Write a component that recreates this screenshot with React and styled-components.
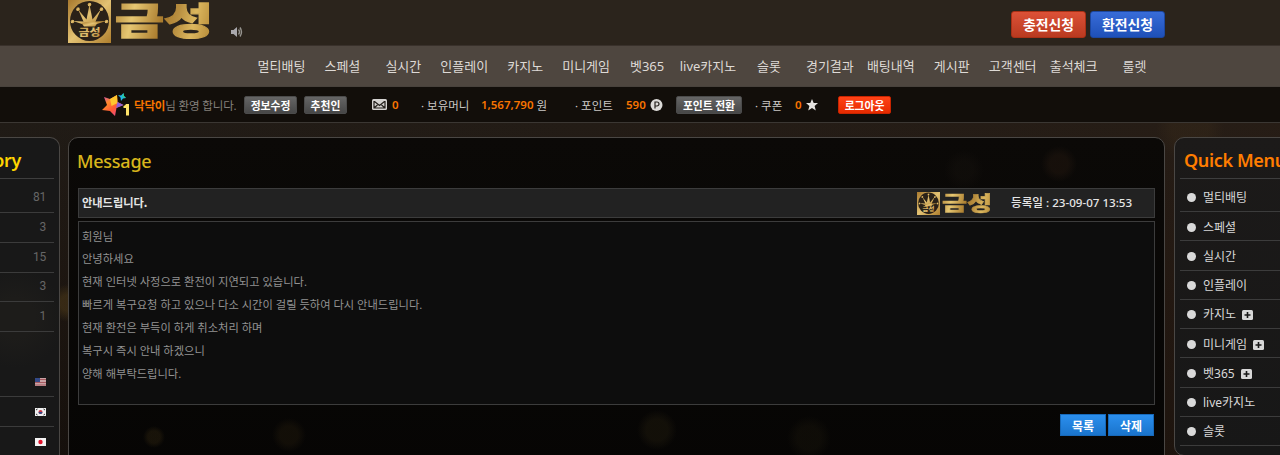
import React from 'react';
import styled, { createGlobalStyle, css } from 'styled-components';

const GlobalStyle = createGlobalStyle`
  * {
    box-sizing: border-box;
  }
  body {
    margin: 0;
    background: #000;
    font-family: 'Noto Sans', 'Noto Sans CJK KR', sans-serif;
  }
`;

const Page = styled.div`
  width: 1280px;
  height: 455px;
  overflow: hidden;
  display: flex;
  flex-direction: column;
  color: #ddd;
`;

const TopBar = styled.header`
  height: 45px;
  flex: none;
  display: flex;
  padding-left: 68px;
  padding-right: 115px;
  background: #2b241c;
`;

const LogoBox = styled.div`
  display: flex;
  align-items: center;
  gap: ${props => (props.$small ? 2 : 4)}px;
  height: ${props => (props.$small ? 23 : 42)}px;
  width: ${props => (props.$small ? 76 : 144)}px;
  flex: none;

  svg {
    display: block;
    flex: none;
  }
`;

/* the wordmark is wider than it is tall, so the heavy face is flattened */
const LogoText = styled.span`
  font-family: 'Noto Sans CJK KR', sans-serif;
  font-weight: 900;
  font-size: ${props => (props.$small ? 27 : 51)}px;
  line-height: 1.1;
  flex: none;
  white-space: nowrap;
  margin-top: ${props => (props.$small ? 0 : -3)}px;
  transform: scale(${props => (props.$small ? '1.01, 0.74' : '1.045, 0.73')});
  transform-origin: 0 50%;
  color: transparent;
  -webkit-text-stroke: ${props => (props.$small ? 0.8 : 1.8)}px transparent;
  background: linear-gradient(100deg, #b28638 0%, #e6c772 20%, #a97b2d 48%, #b98f40 62%, #dcb75e 78%, #b08432 100%);
  background-clip: text;
  -webkit-background-clip: text;
`;

const SoundIcon = styled.svg`
  margin: 26px 0 0 18px;
`;

const TopActions = styled.div`
  display: flex;
  gap: 4px;
  margin: 11px 0 0 auto;
`;

const TopButton = styled.button`
  width: 75px;
  height: 27px;
  padding: 0;
  border: 1px solid ${props => (props.$blue ? '#1c479f' : '#a93015')};
  border-radius: 3px;
  color: #fff;
  font: 700 13.9px/23px 'Noto Sans CJK KR', sans-serif;
  background: ${props =>
    props.$blue
      ? 'linear-gradient(#386cd8, #1e50b8)'
      : 'linear-gradient(#dc5137, #b93a20)'};
`;

const Nav = styled.nav`
  height: 42px;
  flex: none;
  display: grid;
  grid-template-columns: repeat(15, 1fr);
  padding: 0 115px 0 251px;
  border-top: 1px solid #39312b;
  border-bottom: 1px solid #48423c;
  background: #4e463f;
`;

const NavItem = styled.a`
  font-size: 13px;
  line-height: 41px;
  text-align: center;
  white-space: nowrap;
  color: #dedad6;
`;

const InfoBar = styled.div`
  height: 36px;
  flex: none;
  display: flex;
  align-items: center;
  padding-left: 101px;
  border-bottom: 1px solid #3b3733;
  background: #120e0a;
  font-size: 11.5px;
`;

const Slot = styled.div`
  width: ${props => props.$w}px;
  flex: none;
  display: flex;
  align-items: center;
  white-space: nowrap;
  letter-spacing: ${props => (props.$dim ? '-0.15px' : '0')};
  color: ${props => (props.$dim ? '#84807c' : '#ccc9c6')};
`;

const Num = styled.b`
  color: #f77400;
  font-weight: 600;
`;

const SmallButton = styled.button`
  width: ${props => props.$w}px;
  height: 18px;
  padding: 0;
  border: 1px solid ${props => (props.$red ? '#c82400' : '#4b4b4b')};
  border-radius: 2px;
  color: #fff;
  font: 700 10.8px/16px 'Noto Sans CJK KR', sans-serif;
  background: ${props =>
    props.$red
      ? 'linear-gradient(#ff4317, #e62b00)'
      : 'linear-gradient(#656565, #474747)'};
`;

const Body = styled.main`
  flex: 1;
  display: flex;
  align-items: flex-start;
  padding-top: 14px;
  background:
    radial-gradient(circle at 68px 180px, rgba(95, 72, 28, 0.4) 8px, transparent 19px),
    radial-gradient(circle at 1190px 5px, rgba(74, 55, 29, 0.2) 18px, transparent 34px),
    linear-gradient(90deg, rgba(0, 0, 0, 0), rgba(58, 35, 22, 0.25)),
    linear-gradient(#201b16, #1c1510 50%, #140f0b);
`;

const panel = css`
  border: 1px solid #4a4744;
  height: 340px;
`;

const LeftPanel = styled.aside`
  ${panel};
  width: 60px;
  flex: none;
  padding-right: 5px;
  border-left: 0;
  border-radius: 0 10px 0 0;
  background: radial-gradient(circle at 15px 180px, #1d1c1a 20px, #181818 50px);
`;

const SideTitle = styled.h2`
  margin: 0;
  height: 41px;
  padding-left: ${props => props.$indent || 0}px;
  border-bottom: 1px solid #3e3e3e;
  font-size: 18px;
  font-weight: 600;
  line-height: 45px;
  letter-spacing: -0.35px;
  white-space: nowrap;
  color: ${props => props.$color};
`;

const LeftTitle = styled(SideTitle)`
  display: flex;
  justify-content: flex-end;
  padding-right: 33px;
`;

const CountRow = styled.div`
  height: ${props => props.$h}px;
  display: flex;
  align-items: flex-end;
  justify-content: flex-end;
  padding: 0 8px 6px 0;
  border-bottom: 1px solid #3b3b3b;
  font: 12px/17px Roboto, sans-serif;
  letter-spacing: -0.3px;
  color: #666;
`;

const Flag = styled.svg`
  display: block;
  margin-bottom: 4px;
`;

const Content = styled.section`
  ${panel};
  width: 1097px;
  flex: none;
  margin: 0 9px 0 8px;
  padding: 0 9px;
  border-radius: 10px;
  background:
    radial-gradient(circle at 85px 299px, rgba(50, 39, 16, 0.4) 6px, transparent 11px),
    radial-gradient(circle at 220px 297px, rgba(30, 23, 11, 0.5) 9px, transparent 17px),
    radial-gradient(circle at 588px 292px, rgba(36, 30, 15, 0.4) 11px, transparent 20px),
    radial-gradient(circle at 740px 300px, rgba(26, 22, 12, 0.4) 12px, transparent 22px),
    radial-gradient(circle at 990px 26px, rgba(34, 23, 15, 0.5) 9px, transparent 18px),
    radial-gradient(circle at 895px 32px, rgba(22, 18, 14, 0.4) 9px, transparent 20px),
    linear-gradient(#0b0907, #060504);
`;

const PageTitle = styled.h1`
  margin: 0 0 0 -1px;
  height: 50px;
  font-size: 18px;
  font-weight: 500;
  line-height: 46px;
  letter-spacing: -0.25px;
  color: #d8b51c;
`;

const SubjectBar = styled.div`
  width: 1077px;
  height: 30px;
  display: flex;
  align-items: center;
  padding-left: 3px;
  border: 1px solid #3c3c3c;
  background: #222;
  font-size: 11.6px;
  color: #e6e6e6;
`;

const Subject = styled.span`
  flex: 1;
  margin-top: -2px;
  font: 700 11.2px 'Noto Sans CJK KR', sans-serif;
`;

const PostDate = styled.span`
  width: 143px;
  margin: -2px 0 0 18px;
  white-space: nowrap;
  font-weight: 500;
`;

const Article = styled.div`
  width: 1077px;
  height: 184px;
  margin-top: 3px;
  padding: 3.6px 3px;
  border: 1px solid #3c3c3c;
  background: #0d0d0d;
`;

const Line = styled.p`
  margin: 0;
  font-size: 11.27px;
  line-height: 22.83px;
  color: #929292;
`;

const Buttons = styled.div`
  display: flex;
  justify-content: flex-end;
  gap: 2px;
  padding: 9px 1px 0 0;
`;

const BlueButton = styled.button`
  width: 46px;
  height: 22px;
  padding: 0;
  border: 1px solid #1769ba;
  color: #fff;
  font: 700 12px/19px 'Noto Sans CJK KR', sans-serif;
  background: linear-gradient(#2b8fee, #1a74cc);
`;

const RightPanel = styled.aside`
  ${panel};
  width: 200px;
  height: 319px;
  flex: none;
  padding-left: 5px;
  border-radius: 10px;
  background: linear-gradient(#1c1a19, #171717);
`;

const MenuRow = styled.div`
  height: ${props => props.$h}px;
  display: flex;
  align-items: center;
  padding: ${props => (props.$h > 30 ? 4 : 1)}px 0 0 7px;
  border-bottom: 1px solid #3c3c3c;
  font-size: 12px;
  white-space: nowrap;
  color: #d8d8d8;

  &::before {
    content: '';
    width: 9px;
    height: 9px;
    margin: 1px 7px 0 0;
    border-radius: 50%;
    background: #d9d9d9;
  }

  svg {
    margin: 2px 0 0 6px;
  }
`;

const navItems = [
  '멀티배팅', '스페셜', '실시간', '인플레이', '카지노', '미니게임', '벳365', 'live카지노',
  '슬롯', '경기결과', '배팅내역', '게시판', '고객센터', '출석체크', '룰렛',
];

const counts = [
  { value: 81, h: 34 },
  { value: 3, h: 30 },
  { value: 15, h: 30 },
  { value: 3, h: 29 },
  { value: 1, h: 30 },
];

const message = [
  '회원님',
  '안녕하세요',
  '현재 인터넷 사정으로 환전이 지연되고 있습니다.',
  '빠르게 복구요청 하고 있으나 다소 시간이 걸릴 듯하여 다시 안내드립니다.',
  '현재 환전은 부득이 하게 취소처리 하며',
  '복구시 즉시 안내 하겠으니',
  '양해 해부탁드립니다.',
];

const quickMenu = [
  { name: '멀티배팅', h: 33 },
  { name: '스페셜' },
  { name: '실시간' },
  { name: '인플레이' },
  { name: '카지노', more: true },
  { name: '미니게임', more: true },
  { name: '벳365', more: true },
  { name: 'live카지노' },
  { name: '슬롯' },
];

const Emblem = ({ size, id }) => (
  <svg width={size} height={size} viewBox="0 0 43 42" preserveAspectRatio="none">
    <defs>
      <linearGradient id={id} x1="0" y1="0" x2="1" y2="1">
        <stop offset="0" stopColor="#a8792e" />
        <stop offset=".5" stopColor="#e3c273" />
        <stop offset="1" stopColor="#ae7e2d" />
      </linearGradient>
    </defs>
    <path d="M0 0h43v42H0z" fill={`url(#${id})`} />
    <circle cx="21.5" cy="20.5" r="19.5" fill="#2a2118" />
    <g fill={`url(#${id})`}>
      <path d="M14 23.500 5 20.500l10.500.500L10 9l8.500 10 3-14.500 3 14.500L33 9l-5.500 12 10.500-.500-9 3z" />
      <path d="M13.500 22.500q8-2 16 0L27 26H16z" />
      <circle cx="4.500" cy="21" r="1.800" />
      <circle cx="10" cy="9" r="1.800" />
      <circle cx="21.500" cy="4.500" r="1.800" />
      <circle cx="33.500" cy="9" r="1.800" />
      <circle cx="38.500" cy="21" r="1.800" />
      <text
        x="21.500"
        y="44"
        transform="scale(1 .8)"
        fontSize="12"
        fontWeight="900"
        textAnchor="middle"
        fontFamily="'Noto Sans CJK KR', sans-serif"
      >
        금성
      </text>
    </g>
  </svg>
);

const Logo = ({ small }) => (
  <LogoBox $small={small}>
    <Emblem size={small ? 23 : 43} id={small ? 'goldSmall' : 'gold'} />
    <LogoText $small={small}>금성</LogoText>
  </LogoBox>
);

const RankIcon = () => (
  <svg width="30" height="24" viewBox="0 0 30 24">
    <defs>
      <linearGradient id="rank" x1="0" y1="0" x2=".8" y2="1">
        <stop offset="0" stopColor="#c43bd0" />
        <stop offset=".35" stopColor="#ff8a2b" />
        <stop offset=".65" stopColor="#ff5a35" />
        <stop offset="1" stopColor="#e7479a" />
      </linearGradient>
    </defs>
    <path d="m3 4 6 2 7-4 .500 7 6 3-7 3-1.500 8-5-5-8-1 5-5z" fill="url(#rank)" />
    <path d="m9 6 7-4 .500 8-6 3z" fill="#ffc62e" />
    <path d="m16.500 9 6 3-7.500 3z" fill="#8b62d9" />
    <path d="m17 2 3 .500L22.500 0l.500 3 2 2-3 .500L20 8l-.500-3.500z" fill="#24b5e8" />
    <path d="m22.500 0 .500 3 2 2-4-1z" fill="#2dd18c" />
    <path d="M22.500 13q2-.500 2.500-2h3v11.500h-3v-7.500h-2.500z" fill="#ffe36a" />
  </svg>
);

const PlusIcon = () => (
  <svg width="11" height="10" viewBox="0 0 11 10">
    <rect width="11" height="10" rx="1.500" fill="#d8d8d8" />
    <path d="M5.500 2v6M2.500 5h6" stroke="#181818" strokeWidth="1.600" />
  </svg>
);

const App = () => {
  return (
    <Page>
      <GlobalStyle />
      <TopBar>
        <Logo />
        <SoundIcon width="13" height="12" viewBox="0 0 13 12">
          <path d="M1 4h2.500L7 1v10L3.500 8H1z" fill="#aaa9ad" />
          <path d="M8.500 3.500q2 2.500 0 5M10 1.500q3 4.500 0 9" fill="none" stroke="#96948f" strokeWidth="1.400" />
        </SoundIcon>
        <TopActions>
          <TopButton>충전신청</TopButton>
          <TopButton $blue>환전신청</TopButton>
        </TopActions>
      </TopBar>

      <Nav>
        {navItems.map(item => (
          <NavItem key={item}>{item}</NavItem>
        ))}
      </Nav>

      <InfoBar>
        <Slot $w={33}><RankIcon /></Slot>
        <Slot $w={110} $dim><Num>닥닥이</Num>님 환영 합니다.</Slot>
        <Slot $w={60}><SmallButton $w={53}>정보수정</SmallButton></Slot>
        <Slot $w={68}><SmallButton $w={43}>추천인</SmallButton></Slot>
        <Slot $w={20}>
          <svg width="15" height="11" viewBox="0 0 15 11">
            <rect width="15" height="11" rx="1.500" fill="#d5d3d1" />
            <path d="m2.500 2.500 5 4 5-4M2.500 8.500 5.500 6M12.500 8.500l-3-2.500M2 2v7h11V2" fill="none" stroke="#231f1b" strokeWidth="1.200" />
          </svg>
        </Slot>
        <Slot $w={29}><Num>0</Num></Slot>
        <Slot $w={60}>· 보유머니</Slot>
        <Slot $w={94}><Num>1,567,790</Num>&nbsp;원</Slot>
        <Slot $w={51}>· 포인트</Slot>
        <Slot $w={24}><Num>590</Num></Slot>
        <Slot $w={26}>
          <svg width="13" height="12" viewBox="0 0 13 12">
            <circle cx="6.500" cy="6" r="6" fill="#dcdad8" />
            <path d="M5 9.500V3h2a2 2 0 0 1 0 4H5" fill="none" stroke="#25211d" strokeWidth="1.200" />
          </svg>
        </Slot>
        <Slot $w={79}><SmallButton $w={66}>포인트 전환</SmallButton></Slot>
        <Slot $w={40}>· 쿠폰</Slot>
        <Slot $w={11}><Num>0</Num></Slot>
        <Slot $w={32}>
          <svg width="12" height="12" viewBox="0 0 12 12">
            <path d="m6 0 1.700 4H12L8.600 7l1.200 4.500L6 9l-3.800 2.500L3.400 7 0 4h4.300z" fill="#e4e2e0" />
          </svg>
        </Slot>
        <SmallButton $w={53} $red>로그아웃</SmallButton>
      </InfoBar>

      <Body>
        <LeftPanel>
          <LeftTitle $color="#ffd400">Category</LeftTitle>
          {counts.map((row, index) => (
            <CountRow key={index} $h={row.h}>{row.value}</CountRow>
          ))}
          <CountRow $h={65}>
            <Flag width="11" height="8" viewBox="0 0 11 8">
              <path d="M0 0h11v8H0z" fill="#c9a3a5" />
              <path d="M0 1.500h11M0 4.500h11M0 7h11" stroke="#a65a60" />
              <path d="M0 0h5v4H0z" fill="#344a87" />
            </Flag>
          </CountRow>
          <CountRow $h={30}>
            <Flag width="11" height="8" viewBox="0 0 11 8">
              <path d="M0 0h11v8H0z" fill="#eee" />
              <path d="m1 2 1.500-1M1 6l1.500 1M10 2 8.500 1M10 6 8.500 7" stroke="#333" />
              <circle cx="5.500" cy="4" r="2" fill="#c63545" />
              <path d="M3.500 4a2 2 0 0 0 4 0z" fill="#344a87" />
            </Flag>
          </CountRow>
          <CountRow $h={30}>
            <Flag width="11" height="8" viewBox="0 0 11 8">
              <path d="M0 0h11v8H0z" fill="#f4f4f4" />
              <circle cx="5.500" cy="4" r="2.200" fill="#e2142d" />
            </Flag>
          </CountRow>
        </LeftPanel>

        <Content>
          <PageTitle>Message</PageTitle>
          <SubjectBar>
            <Subject>안내드립니다.</Subject>
            <Logo small />
            <PostDate>등록일 : 23-09-07 13:53</PostDate>
          </SubjectBar>
          <Article>
            {message.map(line => (
              <Line key={line}>{line}</Line>
            ))}
          </Article>
          <Buttons>
            <BlueButton>목록</BlueButton>
            <BlueButton>삭제</BlueButton>
          </Buttons>
        </Content>

        <RightPanel>
          <SideTitle $color="#ff7d00" $indent={4}>Quick Menu</SideTitle>
          {quickMenu.map(item => (
            <MenuRow key={item.name} $h={item.h || 29.25}>
              {item.name}
              {item.more && <PlusIcon />}
            </MenuRow>
          ))}
        </RightPanel>
      </Body>
    </Page>
  );
};

export default App;
